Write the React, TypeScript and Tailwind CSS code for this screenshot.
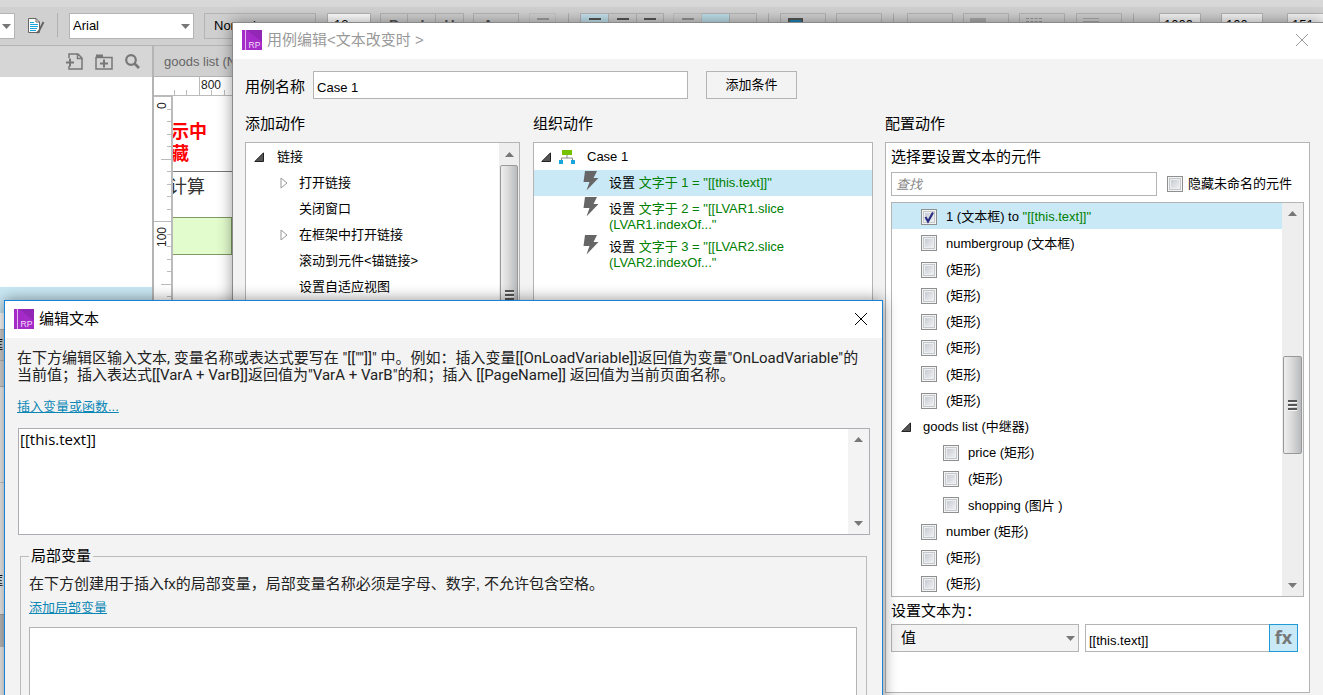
import React from "react";

type WidgetRow = {
    name: string;
    level: "item" | "group" | "child";
    checked?: boolean;
    value?: string;
};

const widgetRows: WidgetRow[] = [
    { name: "1 (文本框) to ", level: "item", checked: true, value: '"[[this.text]]"' },
    { name: "numbergroup (文本框)", level: "item" },
    { name: "(矩形)", level: "item" },
    { name: "(矩形)", level: "item" },
    { name: "(矩形)", level: "item" },
    { name: "(矩形)", level: "item" },
    { name: "(矩形)", level: "item" },
    { name: "(矩形)", level: "item" },
    { name: "goods list (中继器)", level: "group" },
    { name: "price (矩形)", level: "child" },
    { name: "(矩形)", level: "child" },
    { name: "shopping (图片 )", level: "child" },
    { name: "number (矩形)", level: "item" },
    { name: "(矩形)", level: "item" },
    { name: "(矩形)", level: "item" },
];

const linkActions = [
    { name: "打开链接", expandable: true },
    { name: "关闭窗口", expandable: false },
    { name: "在框架中打开链接", expandable: true },
    { name: "滚动到元件<锚链接>", expandable: false },
    { name: "设置自适应视图", expandable: false },
];

const caseActions = [
    { target: '文字于 1 = "[[this.text]]"', rest: "", selected: true },
    { target: '文字于 2 = "[[LVAR1.slice', rest: '(LVAR1.indexOf..."', selected: false },
    { target: '文字于 3 = "[[LVAR2.slice', rest: '(LVAR2.indexOf..."', selected: false },
];

function RpLogo() {
    return (
        <svg className="size-5 shrink-0" viewBox="0 0 20 20" aria-hidden="true">
            <rect width="20" height="20" fill="#a52bc9" />
            <path d="M5 0H20V12Z" fill="#9226b5" />
            <rect x="3" width="1" height="20" fill="#e3b8ee" />
            <text x="6.5" y="18" fontSize="8.5" fontFamily="Liberation Sans, sans-serif" fill="#f5dcfb">RP</text>
        </svg>
    );
}

function CloseIcon() {
    return (
        <svg className="size-3" viewBox="0 0 12 12" fill="none" stroke="currentColor" aria-hidden="true">
            <path d="M0 0L12 12M12 0L0 12" />
        </svg>
    );
}

function Expanded() {
    return (
        <svg className="size-[10px] shrink-0" viewBox="0 0 10 10" aria-hidden="true">
            <path d="M9.5 .8V9.5H.8Z" fill="#555" stroke="#222" />
        </svg>
    );
}

function Collapsed() {
    return (
        <svg className="h-3 w-2 shrink-0" viewBox="0 0 8 12" aria-hidden="true">
            <path d="M1 1L7 6L1 11Z" fill="#fff" stroke="#999" />
        </svg>
    );
}

function Caret({ up = false }: { up?: boolean }) {
    return (
        <svg className="h-[5px] w-[9px] shrink-0" viewBox="0 0 9 5" aria-hidden="true">
            <path d={up ? "M0 5L4.500 0L9 5Z" : "M0 0H9L4.500 5Z"} fill="#777" />
        </svg>
    );
}

function Grip() {
    return (
        <svg className="h-[11px] w-[9px]" viewBox="0 0 9 11" aria-hidden="true">
            <path d="M0 1H9M0 5H9M0 9H9" stroke="#555" strokeWidth="2" />
            <path d="M0 2.500H9M0 6.500H9M0 10.500H9" stroke="#f5f5f5" />
        </svg>
    );
}

function Bolt() {
    return (
        <svg className="h-[21px] w-4 shrink-0" viewBox="0 0 16 21" aria-hidden="true">
            <path d="M2 1H14L10.500 8H15.500L3.500 20.500L6.500 12H.5Z" fill="#666" />
        </svg>
    );
}

function CaseIcon() {
    return (
        <svg className="size-4 shrink-0" viewBox="0 0 16 16" aria-hidden="true">
            <rect x="3" y="1" width="10" height="5" fill="#76c100" />
            <path d="M8 6V9M2.500 12V9H13.500V12" fill="none" stroke="#888" />
            <rect x="0" y="11" width="4" height="4" fill="#19a5dc" />
            <rect x="12" y="11" width="4" height="4" fill="#19a5dc" />
        </svg>
    );
}

function Checkbox({ checked = false }: { checked?: boolean }) {
    return (
        <span className="relative flex size-4 shrink-0">
            <input
                type="checkbox"
                defaultChecked={checked}
                className="peer size-4 appearance-none border border-[#8e8f8f] bg-[linear-gradient(135deg,#b9bfc8,#fbfbfb)] shadow-[inset_0_0_0_1px_#f4f4f4,inset_0_0_0_2px_#c4c8cc,inset_0_0_0_3px_#eceef0]"
            />
            <svg className="pointer-events-none absolute inset-0 hidden size-4 peer-checked:block" viewBox="0 0 16 16" aria-hidden="true">
                <path d="M4.500 8L7 12.500L12 3.500" fill="none" stroke="#2b2f83" strokeWidth="2.200" />
            </svg>
        </span>
    );
}

function RulerTop() {
    return (
        <svg className="h-[19px] w-full" aria-hidden="true">
            <path d="M20.500 13V19M32.500 13V19M57.500 13V19M70.500 13V19M45.500 0V19M0 18.500H400" stroke="#bbb" />
            <text x="47" y="12" fontSize="12" fill="#222">800</text>
        </svg>
    );
}

function RulerLeft() {
    const ticks = Array.from({ length: 24 }, (_, i) => i);
    return (
        <svg className="h-[300px] w-[19px] shrink-0" aria-hidden="true">
            <path d="M18 0V300" stroke="#bbb" strokeWidth="2" />
            {ticks.map((i) => {
                const y = Math.round(i * 12.5);
                const width = i % 10 === 0 ? 19 : i % 5 === 0 ? 11 : 5;
                return <rect key={i} x={18 - width} y={y} width={width} height="1" fill="#bbb" />;
            })}
            <text transform="translate(12 13) rotate(-90)" fontSize="12" fill="#222">0</text>
            <text transform="translate(12 151) rotate(-90)" fontSize="12" fill="#222">100</text>
        </svg>
    );
}

function Separator() {
    return <span className="h-6 w-px shrink-0 bg-[#b0b0b0]" />;
}

function ToolButton({ label, className = "", children }: { label: string; className?: string; children?: React.ReactNode }) {
    return (
        <button type="button" aria-label={label} className={`flex h-[26px] shrink-0 justify-center border border-[#b4b4b4] pt-1 text-sm leading-none text-[#555] ${className}`}>
            {children}
        </button>
    );
}

function Lines() {
    return (
        <svg className="h-4 w-3" viewBox="0 0 12 16" aria-hidden="true">
            <path d="M0 1H12M0 5H8M0 9H12M0 13H8" stroke="#555" strokeWidth="2" />
        </svg>
    );
}

function Toolbar() {
    return (
        <div className="border-b border-[#b4b4b4] bg-[#d0d0d0]">
            <div className="h-[7px] bg-[#d8d8d8]" />
            <div className="flex h-[38px] items-start pt-1.5">
                <div className="flex h-[26px] w-[15px] shrink-0 items-center border border-l-0 border-[#b4b4b4] bg-white pl-[2px]">
                    <Caret />
                </div>
                <svg className="mt-1 ml-3 size-[18px] shrink-0" viewBox="0 0 18 18" aria-hidden="true">
                    <path d="M1.500 1.500H9L12.500 5V15.500H1.500Z" fill="#fff" stroke="#666" />
                    <path d="M9 1.500V5H12.500" fill="none" stroke="#666" />
                    <path d="M3 5.500H7M3 7.500H11M3 9.500H11M3 11.500H10M3 13.500H9" stroke="#19a5dc" />
                    <path d="M16.500 5L12 14L10 16" stroke="#666" strokeWidth="2" fill="none" />
                </svg>
                <span className="ml-3" />
                <Separator />
                <div className="relative ml-[11px] h-[26px] w-[125px] shrink-0">
                    <select aria-label="字体" className="h-full w-full appearance-none border border-[#b4b4b4] bg-white pl-[3px] text-[13px]">
                        <option>Arial</option>
                    </select>
                    <span className="pointer-events-none absolute top-[11px] right-1 flex"><Caret /></span>
                </div>
                <div className="ml-2.5 h-[26px] w-28 shrink-0">
                    <select aria-label="字形" className="h-full w-full appearance-none border border-[#b4b4b4] bg-[#cfcfcf] pl-[9px] text-[13px]">
                        <option>Normal</option>
                    </select>
                </div>
                <input aria-label="字号" defaultValue="13" className="ml-[11px] h-[26px] w-11 shrink-0 border border-[#b4b4b4] bg-white pb-1 pl-1.5 text-[13px]" />
                <ToolButton label="粗体" className="ml-[9px] w-7"><b>B</b></ToolButton>
                <ToolButton label="斜体" className="w-7 border-l-0"><b className="italic">I</b></ToolButton>
                <ToolButton label="下划线" className="w-7 border-l-0"><b>U</b></ToolButton>
                <ToolButton label="文字颜色" className="ml-[9px] w-[46px] pr-4"><b>A</b></ToolButton>
                <ToolButton label="项目符号" className="ml-2.5 w-[27px] opacity-40"><Lines /></ToolButton>
                <span className="ml-3" />
                <Separator />
                <ToolButton label="左对齐" className="ml-[11px] w-[29px] border-[#1e9bd7] bg-[#c3e2ee]"><Lines /></ToolButton>
                <ToolButton label="居中" className="w-7 border-l-0"><Lines /></ToolButton>
                <ToolButton label="右对齐" className="w-[27px] border-l-0"><Lines /></ToolButton>
                <ToolButton label="顶部" className="ml-[9px] w-[29px] opacity-50"><Lines /></ToolButton>
                <ToolButton label="中部" className="w-7 border-l-0 bg-[#bfdfea]" />
                <ToolButton label="底部" className="w-[27px] border-l-0" />
                <span className="ml-[11px]" />
                <Separator />
                <ToolButton label="填充" className="ml-[11px] w-[46px] pr-4">
                    <span className="h-3 w-[15px] border-2 border-[#555] bg-[#1c86bb]" />
                </ToolButton>
                <ToolButton label="阴影" className="ml-2.5 w-[46px]" />
                <span className="ml-[11px]" />
                <Separator />
                <ToolButton label="线条颜色" className="ml-[13px] w-[46px]" />
                <ToolButton label="线宽" className="ml-2.5 w-[46px] pr-4"><span className="h-2 w-4 bg-[#aaa]" /></ToolButton>
                <ToolButton label="线型" className="ml-2.5 w-[46px] pr-4"><span className="h-1 w-4 border-y border-dashed border-[#999]" /></ToolButton>
                <ToolButton label="箭头" className="ml-[11px] w-[46px] pr-4"><span className="h-1 w-4 border-y border-[#aaa]" /></ToolButton>
                <span className="ml-[11px]" />
                <Separator />
                <input aria-label="x" defaultValue="1000" className="ml-[25px] h-[26px] w-[42px] shrink-0 border border-[#b4b4b4] bg-[#f4f4f4] pb-1 pl-1 text-[13px]" />
                <input aria-label="y" defaultValue="100" className="ml-5 h-[26px] w-[42px] shrink-0 border border-[#b4b4b4] bg-[#f4f4f4] pb-1 pl-1 text-[13px]" />
                <input aria-label="w" defaultValue="151" className="ml-6 h-[26px] w-[42px] shrink-0 border border-[#b4b4b4] bg-[#f4f4f4] pb-1 pl-1 text-[13px]" />
            </div>
        </div>
    );
}

function LeftPane() {
    return (
        <div className="flex w-[154px] shrink-0 flex-col border-r-2 border-[#b4b4b4] bg-white text-[13px]">
            <div className="flex h-[31px] items-center justify-end gap-3 bg-[#d6d6d6] pr-3 text-[#777]">
                <svg className="size-[17px]" viewBox="0 0 17 17" fill="none" stroke="currentColor" strokeWidth="1.500" aria-hidden="true">
                    <path d="M3 5V1H12L16 5V16H3V13M11.500 1V5.500H16" />
                    <path d="M0 9.500H8M4 5.500V13.500" strokeWidth="2" />
                </svg>
                <svg className="size-[18px]" viewBox="0 0 18 18" fill="none" stroke="currentColor" strokeWidth="1.500" aria-hidden="true">
                    <path d="M1 4.500H17V16H1Z" />
                    <path d="M1 3H8" strokeWidth="3" />
                    <path d="M5 10.500H13M9 6.500V14.500" strokeWidth="2" />
                </svg>
                <svg className="size-[15px]" viewBox="0 0 15 15" fill="none" stroke="currentColor" aria-hidden="true">
                    <circle cx="6" cy="6" r="4.800" strokeWidth="2.200" />
                    <path d="M9.500 9.500L14 14" strokeWidth="2.600" />
                </svg>
            </div>
            <div className="h-[210px]" />
            <div className="h-[26px] bg-[#c9e8f4]" />
            <div className="h-4" />
            <div className="flex h-8 items-center overflow-hidden border-y border-[#b4b4b4] bg-[#d0d0d0]">
                <span className="-ml-2.5">框</span>
            </div>
            <div className="h-[26px] border-b border-[#b4b4b4] bg-[#d8d8d8]" />
            <div className="h-24 border-b border-[#ccc] bg-[#f3f3f3]" />
            <div className="flex h-[132px] items-end overflow-hidden border-b border-[#aaa] bg-[#f3f3f3] pb-6">
                <span className="-ml-2.5">框</span>
            </div>
            <div className="h-8 bg-[#c0c0c0]" />
            <div className="flex-1 bg-[#f3f3f3]" />
        </div>
    );
}

function Canvas() {
    return (
        <div className="min-w-0 flex-1 bg-white">
            <div className="flex h-[31px] items-center border-b border-[#b4b4b4] bg-[#d0d0d0] pt-0.5 pl-2.5 text-[13px] text-[#666]">goods list (Normal)</div>
            <RulerTop />
            <div className="flex">
                <RulerLeft />
                <div className="min-w-0 flex-1 overflow-hidden">
                    <div className="h-[76px] border-b border-[#777] pt-[25px] text-lg leading-[22px] font-bold text-[#f00]">
                        <p className="-ml-0.5">示中</p>
                        <p className="-ml-0.5">藏</p>
                    </div>
                    <p className="-ml-1 h-[45px] pt-px text-lg leading-7 text-[#333]">计算</p>
                    <div className="h-[38px] w-[59px] border border-l-0 border-[#7c9a62] bg-[#e3fccd]" />
                </div>
            </div>
        </div>
    );
}

function ActionTree() {
    return (
        <div className="flex w-[275px] shrink-0 border border-[#b4b4b4] bg-white text-[13px]">
            <ul className="flex-1">
                <li className="flex h-[27px] items-center gap-[13px] pl-2">
                    <Expanded />
                    <span>链接</span>
                </li>
                {linkActions.map((action) => (
                    <li key={action.name} className="flex h-[26px] items-center pl-[34px]">
                        <span className="flex w-[19px]">{action.expandable && <Collapsed />}</span>
                        {action.name}
                    </li>
                ))}
            </ul>
            <div className="flex w-[20px] flex-col items-center bg-[#eee]">
                <div className="flex h-[22px] items-center"><Caret up /></div>
                <div className="flex h-[267px] w-[18px] justify-center rounded-[2px] border border-[#999] bg-[linear-gradient(90deg,#eee,#ddd_40%,#b8babd)] pt-[124px]">
                    <Grip />
                </div>
            </div>
        </div>
    );
}

function CaseTree() {
    return (
        <div className="w-[340px] shrink-0 border border-[#b4b4b4] bg-white text-[13px]">
            <div className="flex h-[27px] items-center pl-[7px]">
                <Expanded />
                <span className="w-2" />
                <CaseIcon />
                <span className="ml-3">Case 1</span>
            </div>
            {caseActions.map((action) => (
                <div key={action.target} className={`flex gap-2.5 pl-[49px] ${action.selected ? "h-[26px] bg-[#c9e9f7]" : "h-[38px]"}`}>
                    <Bolt />
                    <p className="pt-[5px] leading-4 text-[#008000]">
                        <span className="text-black">设置</span> {action.target}
                        {action.rest && <br />}
                        {action.rest}
                    </p>
                </div>
            ))}
        </div>
    );
}

function WidgetItem({ row }: { row: WidgetRow }) {
    if (row.level === "group") {
        return (
            <li className="flex flex-1 items-center gap-3 pt-0.5 pl-[9px]">
                <Expanded />
                {row.name}
            </li>
        );
    }
    return (
        <li className={`flex flex-1 items-center pt-0.5 ${row.level === "child" ? "pl-[51px]" : "pl-[29px]"} ${row.checked ? "bg-[#c9e9f7]" : ""}`}>
            <label className="flex items-center gap-[9px]">
                <Checkbox checked={row.checked} />
                <span className="whitespace-pre">
                    {row.name}
                    {row.value && <span className="text-[#008000]">{row.value}</span>}
                </span>
            </label>
        </li>
    );
}

function ConfigPanel() {
    return (
        <div className="min-w-0 flex-1 border border-[#b4b4b4] bg-white px-[5px] pb-10">
            <h3 className="flex h-[29px] items-center text-[15px]">选择要设置文本的元件</h3>
            <div className="flex items-center gap-2.5 pr-3 text-[13px]">
                <input aria-label="查找" placeholder="查找" className="h-6 min-w-0 flex-1 border border-[#b4b4b4] px-1 placeholder:text-[#888] placeholder:italic" />
                <label className="flex items-center gap-[5px]">
                    <Checkbox />
                    隐藏未命名的元件
                </label>
            </div>
            <div className="mt-1.5 flex h-[395px] border border-[#b4b4b4] text-[13px]">
                <ul className="flex flex-1 flex-col">
                    {widgetRows.map((row, idx) => (
                        <WidgetItem key={idx} row={row} />
                    ))}
                </ul>
                <div className="flex w-[21px] flex-col items-center bg-[#eee]">
                    <div className="flex h-[153px] pt-2"><Caret up /></div>
                    <div className="flex h-[98px] w-[19px] items-center justify-center rounded-[2px] border border-[#999] bg-[linear-gradient(90deg,#eee,#ddd_40%,#b8babd)]">
                        <Grip />
                    </div>
                    <div className="mt-auto pb-2"><Caret /></div>
                </div>
            </div>
            <label htmlFor="text-kind" className="flex h-[27px] items-center pt-0.5 text-[15px]">设置文本为：</label>
            <div className="flex h-7 pr-1.5">
                <div className="relative w-[188px] shrink-0">
                    <select id="text-kind" className="h-full w-full appearance-none border border-[#b4b4b4] bg-[#f3f3f3] pl-[9px] text-[15px]">
                        <option>值</option>
                    </select>
                    <span className="pointer-events-none absolute top-3 right-1 flex"><Caret /></span>
                </div>
                <input aria-label="值" defaultValue="[[this.text]]" className="ml-1.5 min-w-0 flex-1 border border-r-0 border-[#b4b4b4] px-[3px] pt-1.5 text-[13px]" />
                <button type="button" className="w-[29px] border border-[#1e9bd7] bg-[#c9e9f7] pb-0.5 font-['Open_Sans',sans-serif] text-lg leading-none font-bold text-[#777]">fx</button>
            </div>
        </div>
    );
}

function CaseDialog() {
    return (
        <section className="absolute top-[22px] right-0 bottom-0 left-[232px] overflow-hidden border-t border-l border-[#8a8a8a] bg-[#f3f3f3] shadow-[0_0_14px_rgba(0,0,0,0.4)]">
            <header className="flex h-9 items-center justify-between bg-white pr-[15px] pb-0.5 pl-[9px] text-[#999]">
                <h2 className="flex items-center gap-[5px] text-[15px]">
                    <RpLogo />
                    用例编辑&lt;文本改变时 &gt;
                </h2>
                <button type="button" aria-label="关闭"><CloseIcon /></button>
            </header>
            <div className="pt-3 pr-[13px] pl-3">
                <div className="flex h-7 items-stretch gap-2">
                    <label htmlFor="case-name" className="self-center pt-1 text-[15px]">用例名称</label>
                    <input id="case-name" defaultValue="Case 1" className="w-[375px] border border-[#b4b4b4] bg-white px-[3px] pt-1.5 text-[13px]" />
                    <button type="button" className="ml-2.5 w-[91px] border border-[#b4b4b4] text-[13px]">添加条件</button>
                </div>
                <div className="mt-[13px] flex h-[30px] text-[15px] leading-6">
                    <h3 className="w-72">添加动作</h3>
                    <h3 className="w-[352px]">组织动作</h3>
                    <h3>配置动作</h3>
                </div>
                <div className="flex">
                    <ActionTree />
                    <span className="w-[13px] shrink-0" />
                    <CaseTree />
                    <span className="w-3 shrink-0" />
                    <ConfigPanel />
                </div>
            </div>
        </section>
    );
}

function TextDialog() {
    return (
        <section className="absolute top-[300px] right-[440px] left-1 border border-[#1883d7] bg-[#f3f3f3] pb-6 shadow-[0_0_14px_rgba(0,0,0,0.45)]">
            <header className="flex h-[37px] items-center justify-between bg-white pr-[15px] pb-px pl-[9px]">
                <h2 className="flex items-center gap-[5px] text-[15px]">
                    <RpLogo />
                    编辑文本
                </h2>
                <button type="button" aria-label="关闭"><CloseIcon /></button>
            </header>
            <div className="px-3 pt-3">
                <p className="font-[Roboto,'Noto_Sans_CJK_SC',sans-serif] text-[15px] leading-[17px] whitespace-nowrap text-[#222]">
                    在下方编辑区输入文本, 变量名称或表达式要写在 "[[""]]" 中。例如：插入变量[[OnLoadVariable]]返回值为变量"OnLoadVariable"的
                    <br />
                    当前值；插入表达式[[VarA + VarB]]返回值为"VarA + VarB"的和；插入 [[PageName]] 返回值为当前页面名称。
                </p>
                <a href="#insert" className="mt-[13px] block text-[13px] leading-5 text-[#0a87b5] underline">插入变量或函数...</a>
                <div className="mt-[11px] ml-px flex h-[107px] border border-[#abadb3] bg-white">
                    <textarea
                        aria-label="编辑文本"
                        defaultValue="[[this.text]]"
                        className="flex-1 resize-none px-px font-['Open_Sans','Noto_Sans_CJK_SC',sans-serif] text-[15px] leading-5 outline-none"
                    />
                    <div className="flex w-[21px] flex-col items-center justify-between bg-[#f3f3f3] py-2">
                        <Caret up />
                        <Caret />
                    </div>
                </div>
                <fieldset className="mx-[3px] mt-[11px] border border-[#bbb] pr-[9px] pl-2">
                    <legend className="px-[2px] text-[15px] leading-5">局部变量</legend>
                    <p className="mt-2 text-[15px] leading-5 whitespace-nowrap text-[#222]">在下方创建用于插入fx的局部变量，局部变量名称必须是字母、数字, 不允许包含空格。</p>
                    <a href="#add-variable" className="mt-1 block text-[13px] leading-5 text-[#0a87b5] underline">添加局部变量</a>
                    <div className="mt-[9px] h-[120px] border border-[#b4b4b4] bg-white" />
                </fieldset>
            </div>
        </section>
    );
}

export default function App() {
    return (
        <main className="relative flex h-screen flex-col overflow-hidden bg-white font-['Liberation_Sans','Noto_Sans_CJK_SC',sans-serif] text-black">
            <Toolbar />
            <div className="flex min-h-0 flex-1 overflow-hidden">
                <LeftPane />
                <Canvas />
            </div>
            <CaseDialog />
            <TextDialog />
        </main>
    );
}
